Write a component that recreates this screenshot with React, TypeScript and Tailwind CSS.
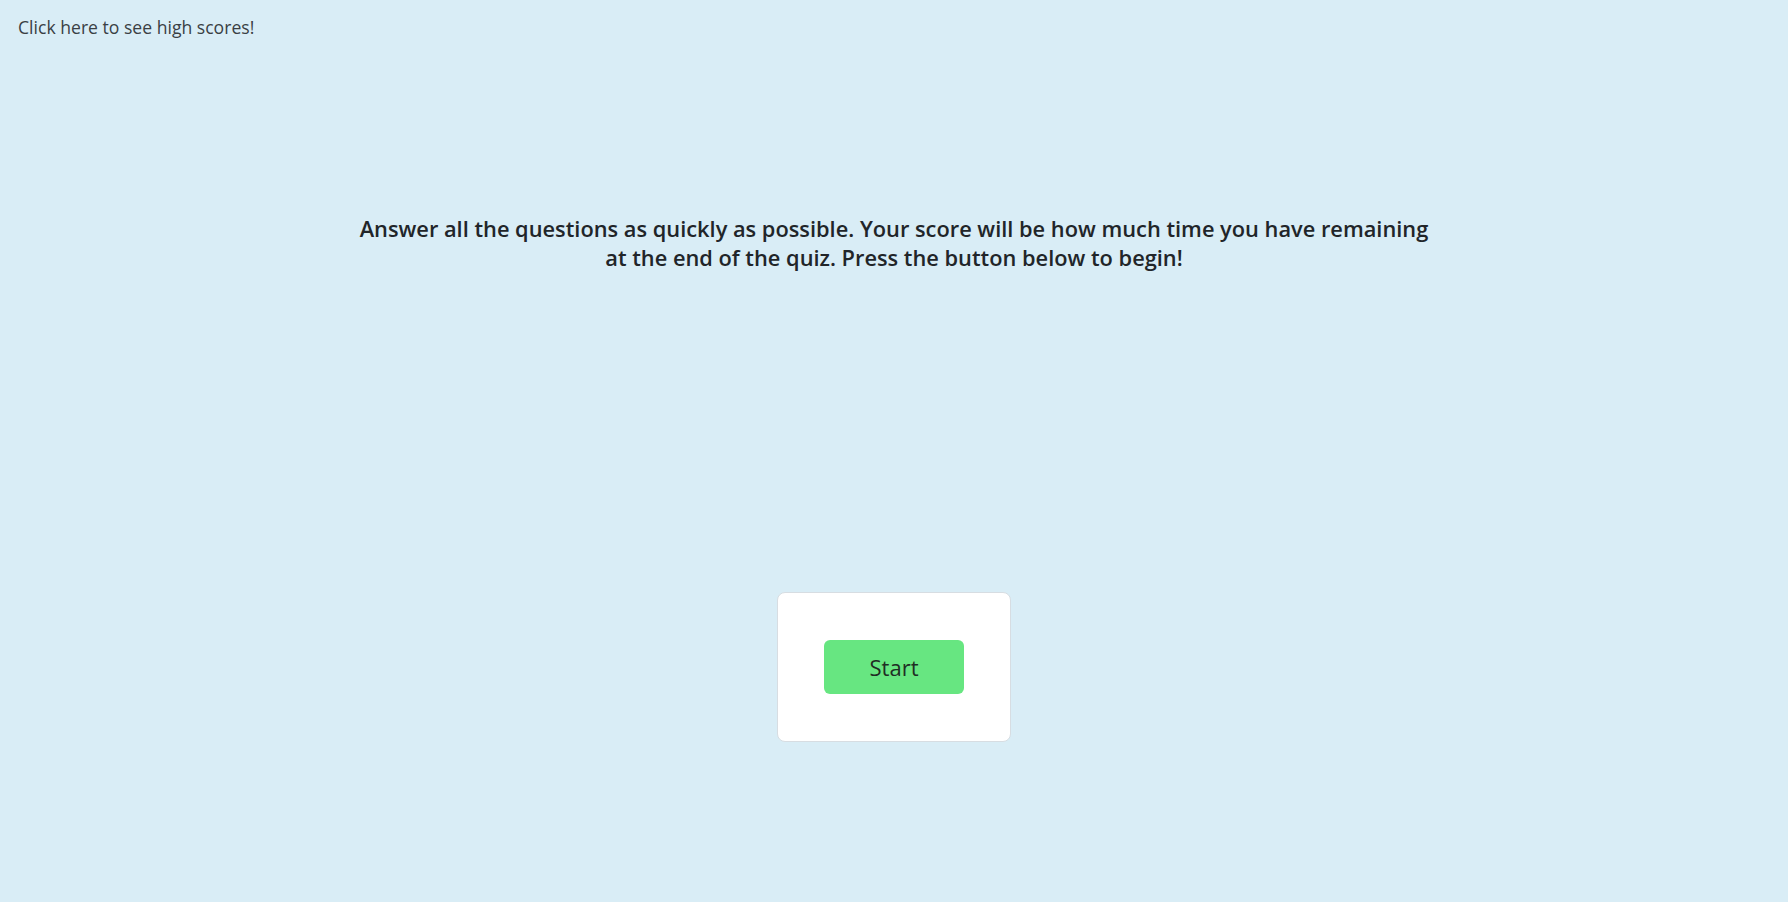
export default function App() {
  return (
    <div
      className="min-h-screen bg-[#d9edf6] text-[#212529]"
      style={{ fontFamily: '"Open Sans", "Noto Sans", sans-serif' }}
    >
      <div className="pt-[15px] pl-[18px]">
        <a className="text-[17.6px] leading-6 text-[#3a3f44] cursor-pointer">
          Click here to see high scores!
        </a>
      </div>

      <div className="mt-[174px] flex justify-center">
        <h4 className="text-center text-[21.8px] font-semibold leading-[29px] text-[#212529]">
          Answer all the questions as quickly as possible. Your score will be how much time you have remaining
          <br />
          at the end of the quiz. Press the button below to begin!
        </h4>
      </div>

      <div className="mt-[320px] flex justify-center">
        <div className="w-[234px] h-[150px] rounded-lg border border-[#d7dde2] bg-white flex items-center justify-center">
          <button className="w-[140px] h-[54px] rounded-md bg-[#67e681] text-[22px] text-[#1f2d24]">
            Start
          </button>
        </div>
      </div>
    </div>
  );
}
